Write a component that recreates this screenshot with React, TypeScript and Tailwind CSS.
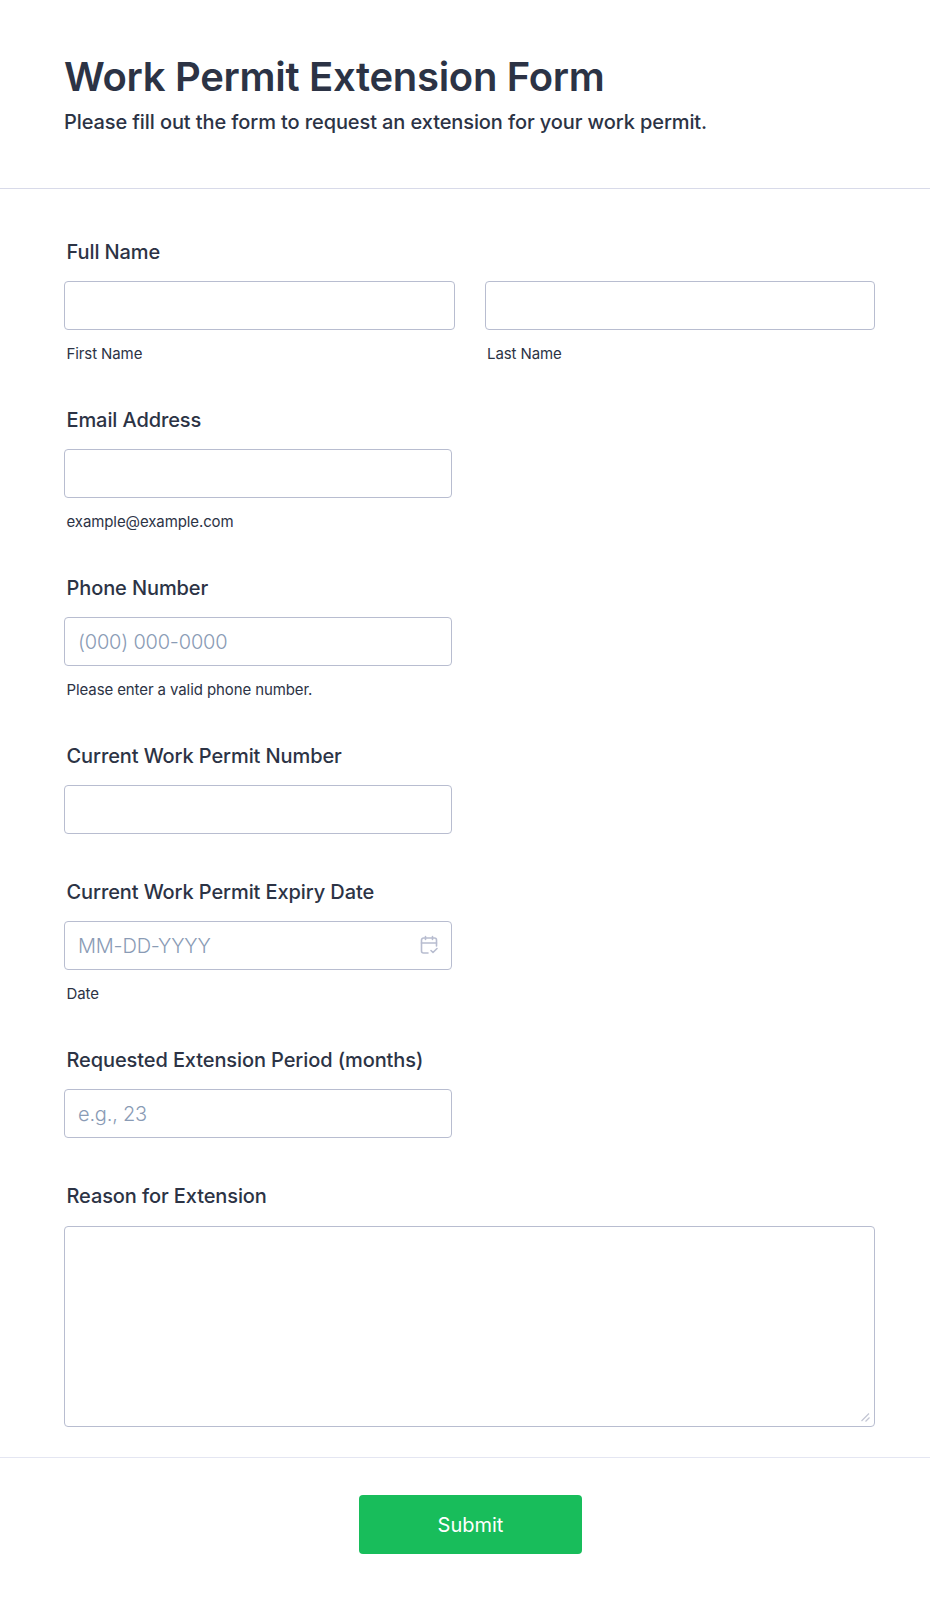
import React from "react";

const inputCls = "block w-full h-[49px] rounded-[4px] border border-[#b8bdd0] bg-white px-[13px] text-[20px] font-light tracking-[-0.2px] text-[#2c3345] placeholder:text-[#8a9bb5] outline-none";
const labelCls = "block pl-[2.5px] mb-[17px] h-[24px] leading-[24px] text-[20px] font-medium tracking-[-0.1px] text-[#2c3345]";
const subCls = "block pl-[2.5px] mt-[14px] h-[20px] leading-[20px] text-[15px] tracking-[-0.1px] text-[#2c3345]";

function Field({ label, sub, tall, children }: { label: string; sub?: string; tall?: boolean; children: React.ReactNode }) {
  return (
    <div className={sub || tall ? "h-[168px] pt-[1px]" : "h-[136px] pt-[1px]"}>
      <label className={labelCls}>{label}</label>
      {children}
      {sub && <span className={subCls}>{sub}</span>}
    </div>
  );
}

export default function App() {
  return (
    <div className="w-[930px] h-[1604px] bg-white font-['Inter',sans-serif] text-[#2c3345]">
      <header className="h-[189px] border-b border-[#d8dae9] px-[64px] pt-[51px]">
        <h1 className="text-[40px] leading-[52px] font-semibold tracking-[-0.3px]">Work Permit Extension Form</h1>
        <p className="mt-[6px] text-[20px] leading-[26px] font-medium tracking-[-0.1px]">Please fill out the form to request an extension for your work permit.</p>
      </header>
      <main className="px-[64px] pt-[50px]">
        <Field label="Full Name" tall>
          <div className="grid grid-cols-2 gap-[30px] w-[811px]">
            <div>
              <input className={inputCls} aria-label="First Name" />
              <span className={subCls}>First Name</span>
            </div>
            <div>
              <input className={inputCls} aria-label="Last Name" />
              <span className={subCls}>Last Name</span>
            </div>
          </div>
        </Field>
        <div className="w-[388px]">
          <Field label="Email Address" sub="example@example.com">
            <input className={inputCls} />
          </Field>
          <Field label="Phone Number" sub="Please enter a valid phone number.">
            <input className={inputCls} placeholder="(000) 000-0000" />
          </Field>
          <Field label="Current Work Permit Number">
            <input className={inputCls} />
          </Field>
          <Field label="Current Work Permit Expiry Date" sub="Date">
            <div className="relative">
              <input className={inputCls} placeholder="MM-DD-YYYY" />
              <svg className="absolute right-[13px] top-[14px]" width="20" height="20" viewBox="0 0 20 20" fill="none" stroke="#b8bdd0" strokeWidth="1.6" strokeLinecap="round" strokeLinejoin="round">
                <path d="M9 18H4.5A2 2 0 0 1 2.5 16V5A2 2 0 0 1 4.5 3H15.5A2 2 0 0 1 17.5 5V11" />
                <path d="M2.5 8H17.5M6.5 1.5V4.5M13.5 1.5V4.5" />
                <path d="M12 15.5L14 17.5L18 13.5" />
              </svg>
            </div>
          </Field>
          <Field label="Requested Extension Period (months)">
            <input className={inputCls} placeholder="e.g., 23" />
          </Field>
        </div>
        <div className="pt-[1px]">
          <label className={labelCls}>Reason for Extension</label>
          <div className="relative w-[811px] pt-[1px]">
            <textarea className="block w-full h-[201px] resize-none rounded-[4px] border border-[#b8bdd0] bg-white px-3 py-2 text-[20px] outline-none" />
            <svg className="absolute right-[5px] bottom-[5px]" width="9" height="9" viewBox="0 0 9 9" fill="none" stroke="#c3c6d4" strokeWidth="1.2">
              <path d="M0.5 8L8 0.5M4.5 8.5L8.5 4.5" />
            </svg>
          </div>
        </div>
      </main>
      <footer className="mt-[30px] border-t border-[#e4e6f2] pt-[37px] pl-[11px] flex justify-center">
        <button className="w-[223px] h-[59px] rounded-[4px] bg-[#18bd5b] text-white text-[20px] font-normal">Submit</button>
      </footer>
    </div>
  );
}
